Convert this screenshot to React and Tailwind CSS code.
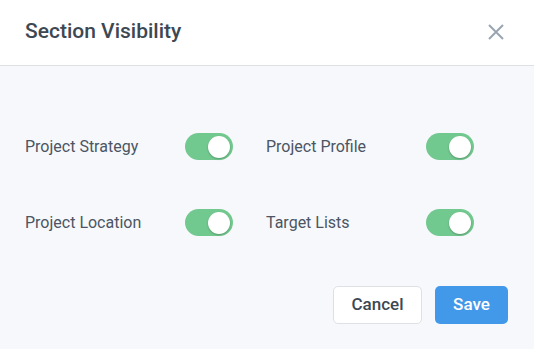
import React from "react";

function Toggle() {
  return (
    <div className="relative w-[48px] h-[27px] rounded-full bg-[#72c98f] shrink-0">
      <div className="absolute right-[3px] top-[2.5px] w-[22px] h-[22px] rounded-full bg-white shadow-[0_1px_2px_rgba(0,0,0,0.25)]" />
    </div>
  );
}

function Row({ label }) {
  return (
    <div className="flex items-center justify-between h-[27px]">
      <span className="text-[16px] text-[#4b5563] leading-none">{label}</span>
      <Toggle />
    </div>
  );
}

export default function App() {
  return (
    <div
      className="w-[534px] h-[349px] bg-[#f7f8fb] flex flex-col"
      style={{ fontFamily: "Roboto, 'Liberation Sans', sans-serif" }}
    >
      <div className="h-[66px] bg-white border-b border-[#dde1e6] flex items-center justify-between pl-[25px] pr-[30px] shrink-0">
        <h1 className="text-[21px] font-medium text-[#3d4852] pb-[2px]">Section Visibility</h1>
        <svg width="16" height="16" viewBox="0 0 16 16" className="mb-[2px]">
          <path d="M1 1 L15 15 M15 1 L1 15" stroke="#9aa5b1" strokeWidth="2" strokeLinecap="butt" />
        </svg>
      </div>
      <div className="pt-[67px] pl-[25px]">
        <div className="grid grid-cols-[208px_208px] gap-x-[33px] gap-y-[49px]">
          <Row label="Project Strategy" />
          <Row label="Project Profile" />
          <Row label="Project Location" />
          <Row label="Target Lists" />
        </div>
      </div>
      <div className="flex justify-end gap-[13px] pr-[26px] mt-[50px]">
        <button className="w-[89px] h-[38px] rounded-[5px] bg-white border border-[#dde1e6] text-[17px] font-medium text-[#3d4852]">
          Cancel
        </button>
        <button className="w-[73px] h-[38px] rounded-[5px] bg-[#4299e9] text-[17px] font-medium text-white">
          Save
        </button>
      </div>
    </div>
  );
}
